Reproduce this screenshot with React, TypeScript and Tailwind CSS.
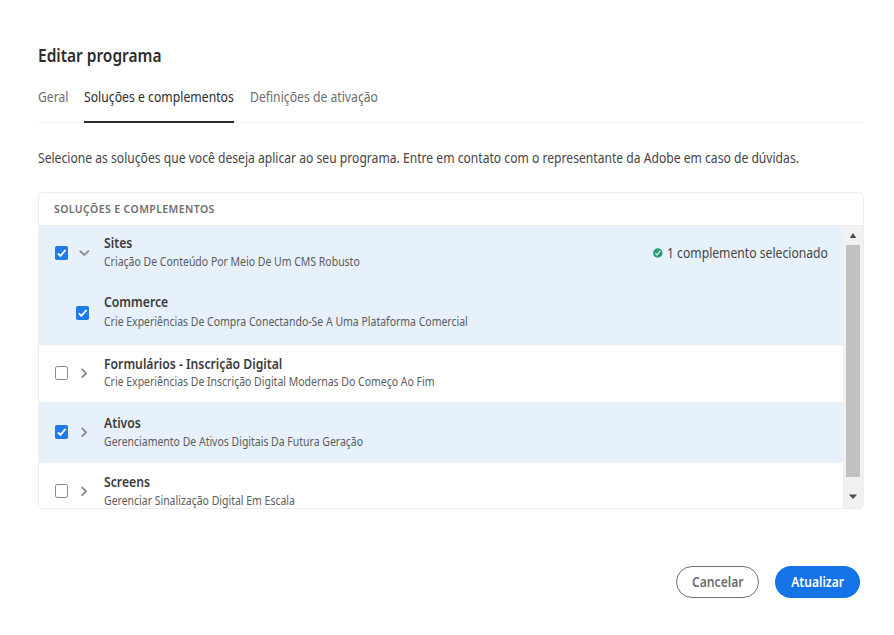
import React from "react";

type CheckProps = { checked: boolean };

function Check({ checked }: CheckProps) {
  return checked ? (
    <svg className="block h-[14px] w-[13px] shrink-0" viewBox="0 0 13 14" role="img" aria-label="Selecionado">
      <rect width="13" height="14" rx="1.8" fill="#1f7aec" />
      <path d="M2.9 7.4 5.4 9.9 10.6 3.9" fill="none" stroke="#fff" strokeWidth="1.9" />
    </svg>
  ) : (
    <svg className="block h-[14px] w-[13px] shrink-0" viewBox="0 0 13 14" role="img" aria-label="Não selecionado">
      <rect x=".5" y=".5" width="12" height="13" rx="1.8" fill="#fff" stroke="#858585" />
    </svg>
  );
}

function Chevron({ open }: { open: boolean }) {
  return (
    <svg className="block h-[10px] w-[10px] shrink-0" viewBox="0 0 10 10" fill="none" stroke="#858585" strokeWidth="1.7" strokeLinecap="round" strokeLinejoin="round">
      <path d={open ? "M1.2 3.2 5.4 7 9.4 3.2" : "M3.2 1.3 7.1 5.3 3.2 9.2"} />
    </svg>
  );
}

type RowProps = {
  name: string;
  text: string;
  textClass?: string;
  checked: boolean;
  child?: boolean;
  open?: boolean;
  rowClass: string;
  checkClass?: string;
  note?: React.ReactNode;
};

function Row({ name, text, textClass = "pt-px", checked, child, open = false, rowClass, checkClass = "pt-[12px]", note }: RowProps) {
  return (
    <div className={`flex shrink-0 items-start ${checked ? "bg-[#e6f1fc]" : "bg-white"} ${rowClass}`}>
      <div className={`flex w-[65px] shrink-0 items-center ${checkClass} ${child ? "pl-[37px]" : "gap-[11px] pl-[16px]"}`}>
        <Check checked={checked} />
        {!child && <Chevron open={open} />}
      </div>
      <div className="min-w-0 flex-1 whitespace-nowrap">
        <div className="origin-left scale-x-[0.872] text-[14px] leading-[18px] font-semibold text-[#3c3c3c]">{name}</div>
        <div className={`origin-left scale-x-[0.873] text-[12px] leading-[18px] text-[#5c5c5c] ${textClass}`}>{text}</div>
      </div>
      {note}
    </div>
  );
}

export default function App() {
  return (
    <main className="h-[635px] w-[894px] overflow-hidden bg-white pt-[45px] pr-[30px] pl-[38px] font-['Noto_Sans',sans-serif] whitespace-nowrap text-[#454545]">
      <h1 className="origin-left scale-x-[0.91] text-[17px] leading-[22px] font-semibold text-[#2c2c2c]">Editar programa</h1>
      <nav className="mt-[20px] flex h-[36px] gap-[16px] border-b border-[#f2f2f2] text-[14px] leading-[20px] text-[#6e6e6e]">
        <span className="w-[30px]"><span className="inline-block origin-left scale-x-[0.868]">Geral</span></span>
        <span className="h-[36px] w-[150px] border-b-2 border-[#2c2c2c] text-[#2c2c2c]">
          <span className="inline-block origin-left scale-x-[0.873]">Soluções e complementos</span>
        </span>
        <span className="inline-block origin-left scale-x-[0.871]">Definições de ativação</span>
      </nav>
      <p className="mt-[25px] origin-left scale-x-[0.866] text-[14px] leading-[20px]">
        Selecione as soluções que você deseja aplicar ao seu programa. Entre em contato com o representante da Adobe em caso de dúvidas.
      </p>
      <section className="mt-[24px] flex h-[317px] flex-col overflow-hidden rounded-[4px] border border-[#ededed]">
        <header className="h-[33px] shrink-0 border-b border-[#ededed] pl-[15px] text-[10.5px] leading-[33px] font-semibold tracking-[0.4px] text-[#6e6e6e]">
          SOLUÇÕES E COMPLEMENTOS
        </header>
        <div className="flex min-h-0 flex-1">
          <div className="flex min-w-0 flex-1 flex-col overflow-hidden">
            <Row
              name="Sites"
              text="Criação De Conteúdo Por Meio De Um CMS Robusto"
              checked open rowClass="h-[57px] border-b border-[#ebf1f8] pt-[8px]"
              note={
                <div className="flex items-center gap-[4px] pt-[9px] pr-[15px] text-[14px] leading-[20px]">
                  <svg className="h-[10px] w-[10px]" viewBox="0 0 10 10">
                    <circle cx="4.8" cy="5" r="4.7" fill="#2d9d78" />
                    <path d="M2.4 5.3 4 7 7.2 2.9" fill="none" stroke="#fff" strokeWidth="1.1" />
                  </svg>
                  <span className="w-[161px]"><span className="inline-block origin-left scale-x-[0.868]">1 complemento selecionado</span></span>
                </div>
              }
            />
            <Row
              name="Commerce"
              text="Crie Experiências De Compra Conectando-Se A Uma Plataforma Comercial" textClass="pt-[2px]"
              checked child rowClass="h-[62px] border-b border-[#ededed] pt-[10px]" checkClass="pt-[13px]"
            />
            <Row
              name="Formulários - Inscrição Digital"
              text="Crie Experiências De Inscrição Digital Modernas Do Começo Ao Fim" textClass=""
              checked={false} rowClass="h-[57px] pt-[10px]" checkClass="pt-[11px]"
            />
            <Row
              name="Ativos"
              text="Gerenciamento De Ativos Digitais Da Futura Geração"
              checked rowClass="h-[61px] border-y border-[#eaf0f6] pt-[11px]" checkClass="pt-[11px]"
            />
            <Row
              name="Screens"
              text="Gerenciar Sinalização Digital Em Escala"
              checked={false} rowClass="h-[59px] pt-[10px]" checkClass="pt-[11px]"
            />
          </div>
          <div className="flex w-[20px] shrink-0 flex-col items-center bg-[#f1f1f1]">
            <svg className="h-[19px] w-[10px] shrink-0" viewBox="0 0 10 19"><path d="M1.8 12 4.7 7.5 5.4 7.5 8.2 12Z" fill="#4a4a4a" /></svg>
            <div className="h-[232px] w-[14px] shrink-0 bg-[#c1c1c1]" />
            <svg className="h-[31px] w-[10px] shrink-0" viewBox="0 0 10 31"><path d="M.9 17.5h8.2L5 22Z" fill="#4a4a4a" /></svg>
          </div>
        </div>
      </section>
      <footer className="mt-[57px] flex justify-end gap-[16px] pr-[4px] text-[14px] font-semibold">
        <button className="h-[32px] w-[83px] rounded-full border border-[#707070] pb-[2px] text-[#6e6e6e]"><span className="inline-block scale-x-[0.868]">Cancelar</span></button>
        <button className="h-[32px] w-[85px] rounded-full bg-[#1473e6] pb-[2px] text-white"><span className="inline-block scale-x-[0.86]">Atualizar</span></button>
      </footer>
    </main>
  );
}
